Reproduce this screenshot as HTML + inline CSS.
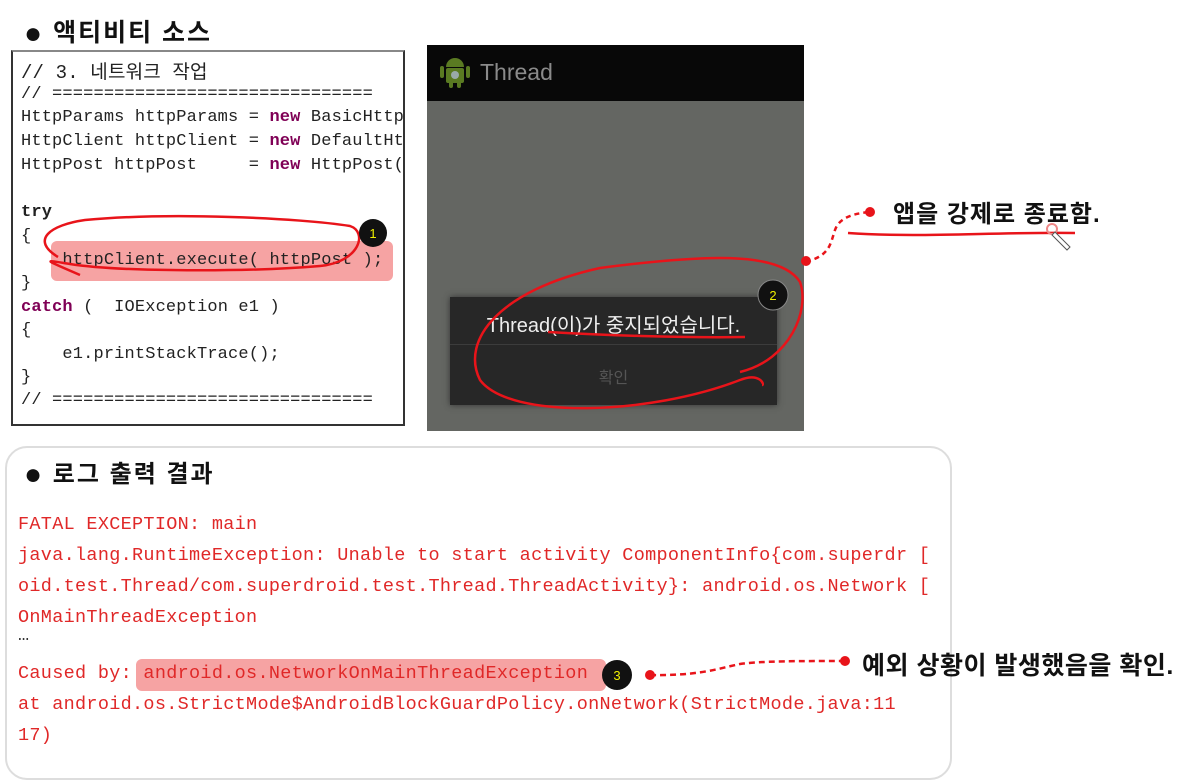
<!DOCTYPE html>
<html><head><meta charset="utf-8"><style>
body{margin:0;width:1204px;height:754px;background:#fff;position:relative;overflow:hidden;font-family:"Liberation Sans","Noto Sans CJK KR",sans-serif}
.abs{position:absolute}
.h{font-weight:bold;font-size:25px;color:#111;white-space:nowrap;letter-spacing:2px}
.code{position:absolute;left:11px;top:50px;width:390px;height:372px;border:2px solid #333;border-top-color:#888;overflow:hidden;background:#fff}
.code div{position:absolute;left:8px;font-family:"Liberation Mono","Noto Sans CJK KR",monospace;font-size:17px;line-height:20px;color:#222;white-space:pre;letter-spacing:0.15px}
.cm{color:#3f7f5f}.kw{color:#7f0055;font-weight:bold}
.log div{position:absolute;left:18px;font-family:"Liberation Mono",monospace;font-size:18.5px;line-height:22px;color:#e02828;white-space:pre;letter-spacing:0.3px}
</style></head><body>
<div class="abs h" style="left:24px;top:13px"><span style="font-size:30px;vertical-align:-2px">●</span> 액티비티 소스</div>
<div class="code">
<div class="cm" style="top:11px;font-size:19px">// 3. 네트워크 작업</div>
<div class="cm" style="top:33px">// ===============================</div>
<div style="top:56px">HttpParams httpParams = <span class="kw">new</span> BasicHttp</div>
<div style="top:80px">HttpClient httpClient = <span class="kw">new</span> DefaultHt</div>
<div style="top:104px">HttpPost httpPost     = <span class="kw">new</span> HttpPost(</div>
<div class="kw" style="top:151px">try</div>
<div style="top:175px">{</div>
<div style="top:189px;left:38px;width:342px;height:40px;background:#f6a3a3;border-radius:6px"></div>
<div style="top:199px">    httpClient.execute( httpPost );</div>
<div style="top:222px">}</div>
<div style="top:246px"><span class="kw">catch</span> (  IOException e1 )</div>
<div style="top:269px">{</div>
<div style="top:293px">    e1.printStackTrace();</div>
<div style="top:316px">}</div>
<div class="cm" style="top:339px">// ===============================</div>
</div>
<!-- phone -->
<div class="abs" style="left:427px;top:45px;width:377px;height:386px;background:#646662"></div>
<div class="abs" style="left:427px;top:45px;width:377px;height:56px;background:#080808"></div>
<svg class="abs" style="left:440px;top:57px" width="30" height="32" viewBox="0 0 30 32"><rect x="0" y="9" width="4" height="12" rx="2" fill="#5a7a22"/><rect x="26" y="9" width="4" height="12" rx="2" fill="#5a7a22"/><path d="M6 10 A9 9 0 0 1 24 10 Z" fill="#5a7a22"/><rect x="6" y="11" width="18" height="15" rx="2" fill="#5a7a22"/><rect x="9" y="24" width="4" height="7" rx="2" fill="#5a7a22"/><rect x="17" y="24" width="4" height="7" rx="2" fill="#5a7a22"/><circle cx="15" cy="18" r="4" fill="#9aa"/></svg>
<div class="abs" style="left:480px;top:59px;font-size:23px;color:#8a8a8a">Thread</div>
<div class="abs" style="left:450px;top:297px;width:327px;height:108px;background:#272727;box-shadow:0 0 6px #333"></div>
<div class="abs" style="left:450px;top:344px;width:327px;height:1px;background:#3c3c3c"></div>
<div class="abs" style="left:450px;top:309px;width:327px;text-align:center;font-size:20px;color:#eee">Thread(이)가 중지되었습니다.</div>
<div class="abs" style="left:450px;top:364px;width:327px;text-align:center;font-size:16px;color:#555">확인</div>
<div class="abs h" style="left:893px;top:194px;font-size:24px;letter-spacing:1px">앱을 강제로 종료함.</div>
<!-- log box -->
<div class="abs" style="left:5px;top:446px;width:943px;height:330px;border:2px solid #ddd;border-radius:22px"></div>
<div class="abs h" style="left:24px;top:454px;font-size:24px"><span style="font-size:30px;vertical-align:-2px">●</span> 로그 출력 결과</div>
<div class="log">
<div style="top:514px">FATAL EXCEPTION: main</div>
<div style="top:545px">java.lang.RuntimeException: Unable to start activity ComponentInfo{com.superdr [</div>
<div style="top:576px">oid.test.Thread/com.superdroid.test.Thread.ThreadActivity}: android.os.Network [</div>
<div style="top:607px">OnMainThreadException</div>
<div style="top:625px;color:#333">…</div>
<div style="top:659px;left:136px;width:470px;height:32px;background:#f6a3a3;border-radius:6px"></div>
<div style="top:663px">Caused by: android.os.NetworkOnMainThreadException</div>
<div style="top:694px">at android.os.StrictMode$AndroidBlockGuardPolicy.onNetwork(StrictMode.java:11</div>
<div style="top:725px">17)</div>
</div>
<div class="abs h" style="left:862px;top:646px;font-size:25px;letter-spacing:0.5px">예외 상황이 발생했음을 확인.</div>
<svg class="abs" style="left:0;top:0" width="1204" height="754">
<g fill="none" stroke="#e8141a" stroke-width="2.5">
<path d="M58 257 C30 240 50 225 85 220 C170 212 300 218 350 226 C368 232 360 262 320 266 C250 272 120 272 70 264 C45 260 40 258 80 275"/>
<path d="M548 332 C600 335 680 338 745 337"/>
<path d="M740 372 C790 360 810 310 800 282 C780 250 700 255 600 268 C500 290 460 340 480 380 C510 420 650 415 740 380 C760 372 765 385 762 385"/>
<path d="M848 233 C920 238 990 232 1075 233"/>
<path d="M806 262 C830 255 830 245 835 230 C840 215 860 213 870 212" stroke-dasharray="5 4"/>
<path d="M650 675 C700 676 720 668 740 664 C760 661 800 661 845 661" stroke-dasharray="6 4"/>
</g>
<g fill="#e8141a"><circle cx="806" cy="261" r="5"/><circle cx="870" cy="212" r="5"/><circle cx="650" cy="675" r="5"/><circle cx="845" cy="661" r="5"/></g>
<g font-family="Liberation Sans" font-size="13" text-anchor="middle">
<circle cx="373" cy="233" r="14" fill="#111"/><text x="373" y="238" fill="#ee0">1</text>
<circle cx="773" cy="295" r="15" fill="#111" stroke="#888"/><text x="773" y="300" fill="#ee0">2</text>
<circle cx="617" cy="675" r="15" fill="#111"/><text x="617" y="680" fill="#ee0">3</text>
</g>
<circle cx="1052" cy="229" r="5" fill="none" stroke="#e88" stroke-width="2"/>
<path d="M1055 232 L1070 247 L1067 250 L1052 235 Z" fill="#fff" stroke="#555"/>
</svg>
</body></html>
